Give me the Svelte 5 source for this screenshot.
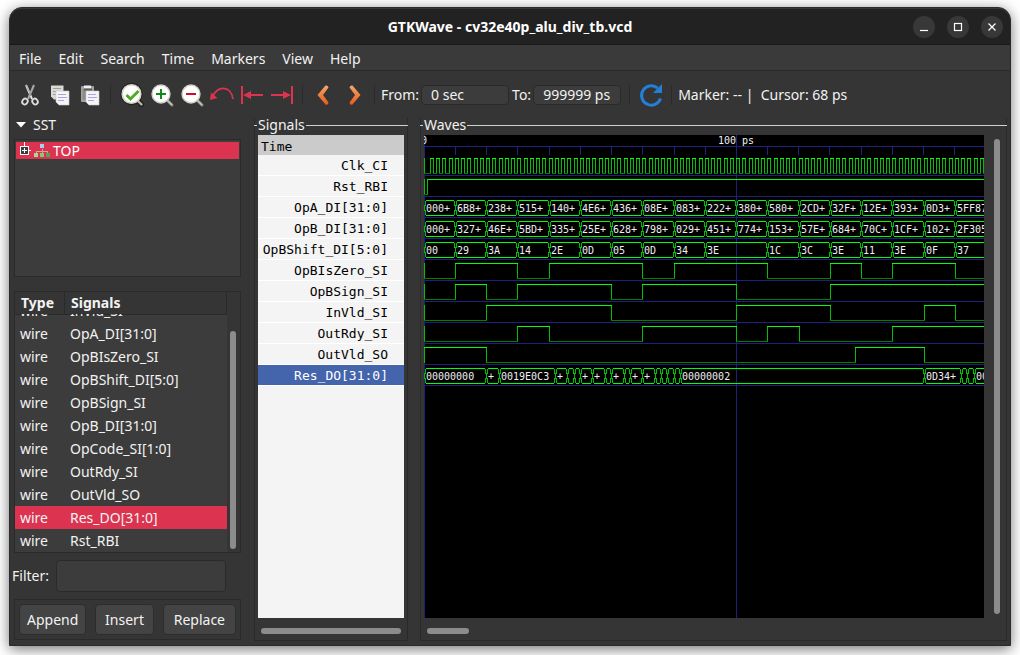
<script>
  const menus = ['File', 'Edit', 'Search', 'Time', 'Markers', 'View', 'Help'];

  const wires = [
    'InVld_SI', 'OpA_DI[31:0]', 'OpBIsZero_SI', 'OpBShift_DI[5:0]', 'OpBSign_SI', 'OpB_DI[31:0]',
    'OpCode_SI[1:0]', 'OutRdy_SI', 'OutVld_SO', 'Res_DO[31:0]', 'Rst_RBI'
  ];
  let selected = $state('Res_DO[31:0]');
  let filter = $state('');
  let from = $state('0 sec');
  let to = $state('999999 ps');

  const END = 180;
  const px = (ps) => Math.floor(ps * 3.125);
  const every10 = (labels) => labels.split(' ').map((label, i) => [i * 10, label]);

  // Bits list the times at which the value flips, starting from `start`.
  const signals = [
    { name: 'Clk_CI', start: 0, flips: Array.from({ length: END - 2 }, (_, i) => i + 2) },
    { name: 'Rst_RBI', start: 0, flips: [1] },
    { name: 'OpA_DI[31:0]', bus: every10('000+ 6B8+ 238+ 515+ 140+ 4E6+ 436+ 08E+ 083+ 222+ 380+ 580+ 2CD+ 32F+ 12E+ 393+ 0D3+ 5FF87') },
    { name: 'OpB_DI[31:0]', bus: every10('000+ 327+ 46E+ 5BD+ 335+ 25E+ 628+ 798+ 029+ 451+ 774+ 153+ 57E+ 684+ 70C+ 1CF+ 102+ 2F305') },
    { name: 'OpBShift_DI[5:0]', bus: [[0, '00'], [10, '29'], [20, '3A'], [30, '14'], [40, '2E'], [50, '0D'], [60, '05'], [70, '0D'], [80, '34'], [90, '3E'], [110, '1C'], [120, '3C'], [130, '3E'], [140, '11'], [150, '3E'], [160, '0F'], [170, '37']] },
    { name: 'OpBIsZero_SI', start: 0, flips: [10, 30, 40, 70, 80, 110, 130, 140, 150, 170] },
    { name: 'OpBSign_SI', start: 0, flips: [10, 20, 30, 60, 70, 100, 130] },
    { name: 'InVld_SI', start: 0, flips: [20, 60, 100, 130, 160, 170] },
    { name: 'OutRdy_SI', start: 0, flips: [30, 40, 70, 100, 110, 120, 150] },
    { name: 'OutVld_SO', start: 1, flips: [20, 138, 160] },
    { name: 'Res_DO[31:0]', bus: [[0, '00000000'], [20, '+'], [24, '0019E0C3'], [42, '+'], [46, ''], [48, ''], [50, '+'], [54, '+'], [58, ''], [60, '+'], [64, ''], [66, '+'], [70, '+'], [74, ''], [76, ''], [78, ''], [80, ''], [82, '00000002'], [160, '0D34+'], [172, ''], [174, ''], [176, '00']] }
  ];

  const ticks = [31, 62, 93, 125, 156, 187, 218, 250, 281, 312, 343, 374, 405, 437, 468, 499, 530];

  function trace(sig, row) {
    const top = 23 + row * 21;
    const low = top + 15;
    let hi = '';
    let lo = '';
    let edge = '';
    const texts = [];
    if (sig.bus) {
      sig.bus.forEach(([t, label], i) => {
        const last = i === sig.bus.length - 1;
        const x = px(t);
        const next = last ? px(END) : px(sig.bus[i + 1][0]);
        const a = x + 2;
        const b = next - 1;
        hi += `M${a} ${top + 0.5}H${b}M${a} ${low + 0.5}H${b}`;
        edge += `M${x + 1.5} ${top + 1}V${top + 4}L${x + 0.5} ${top + 7}V${top + 9}L${x + 1.5} ${low - 3}V${low}`;
        if (i) edge += `M${x - 0.5} ${top + 1}V${top + 4}L${x + 0.5} ${top + 7}M${x + 0.5} ${top + 9}L${x - 0.5} ${low - 3}V${low}`;
        if (label) texts.push({ x: x + 2, y: low - 3, label });
      });
    } else {
      let v = sig.start;
      let x = 0;
      edge += `M0.5 ${top}V${low + 1}`;
      for (const t of [...sig.flips, END]) {
        const n = px(t);
        if (v) hi += `M${x} ${top + 0.5}H${n + 1}`;
        else lo += `M${x} ${low + 0.5}H${n + 1}`;
        edge += `M${n + 0.5} ${top}V${low + 1}`;
        x = n;
        v = 1 - v;
      }
    }
    return { hi, lo, edge, texts };
  }
  const traces = signals.map(trace);
</script>

<div class="window">
  <header class="titlebar">
    <h1>GTKWave - cv32e40p_alu_div_tb.vcd</h1>
    <div class="winbtns">
      <button aria-label="Minimize"><svg width="22" height="22"><path d="M7 14.5h8" /></svg></button>
      <button aria-label="Maximize"><svg width="22" height="22"><rect x="7.5" y="7.5" width="7" height="7" /></svg></button>
      <button aria-label="Close"><svg width="22" height="22"><path d="M7.5 7.5l7 7M14.5 7.5l-7 7" /></svg></button>
    </div>
  </header>

  <nav class="menubar">
    {#each menus as m}<button>{m}</button>{/each}
  </nav>

  <div class="toolbar">
    <button aria-label="Cut"><svg width="24" height="24" fill="none">
      <path d="M8 2l6 14" stroke="#e6e6e6" stroke-width="2" /><path d="M16 2l-6 14" stroke="#a9a9a9" stroke-width="2" />
      <path d="M8 2l5 11" stroke="#777" stroke-width=".6" />
      <ellipse cx="7.3" cy="18.5" rx="2.6" ry="3" transform="rotate(35 7 18)" stroke="#ddd" stroke-width="1.8" />
      <ellipse cx="16.7" cy="18.5" rx="2.6" ry="3" transform="rotate(-35 17 18)" stroke="#ddd" stroke-width="1.8" />
    </svg></button>
    <button aria-label="Copy"><svg width="24" height="24">
      <path d="M3 2.500h12.500v14H6l-3-3z" fill="#d9d9d6" /><path d="M5 5.500h8M5 8.500h3M5 11.500h3" stroke="#a0a09c" />
      <path d="M8 8h13v14H11l-3-3z" fill="#f5f5f5" stroke="#c9c9c9" stroke-width=".6" />
      <path d="M10 11.500h8M10 14.500h9M10 17.500h6" stroke="#a6a6e8" />
    </svg></button>
    <button aria-label="Paste"><svg width="24" height="24">
      <rect x="3" y="3" width="13" height="16" rx="1" fill="#a3a39f" /><rect x="4.500" y="6" width="10" height="11" fill="#8b8b87" />
      <path d="M6 2.500h7v3H6z" fill="#f0f0ee" /><path d="M6 5.500h8v2H6z" fill="#5a5a58" />
      <path d="M8 8h13v14H11l-3-3z" fill="#f5f5f5" stroke="#c9c9c9" stroke-width=".6" />
      <path d="M10 11.500h8M10 14.500h9M10 17.500h6" stroke="#a6a6e8" />
    </svg></button>
    <i class="sep"></i>
    <button aria-label="Zoom Fit"><svg width="26" height="26">
      <path d="M18.500 18.500l4 4" stroke="#1e1e1c" stroke-width="5" stroke-linecap="round" /><circle cx="12.500" cy="12" r="11" fill="#1e1e1c" />
      <path d="M18.500 18.500l4 4" stroke="#b5b5ae" stroke-width="2.400" stroke-linecap="round" />
      <circle cx="12.500" cy="12" r="9.300" fill="#fff" stroke="#d5d5c8" stroke-width="1.600" />
      <path d="M7.500 13l4 4 8-8" fill="none" stroke="#4caa28" stroke-width="3" />
    </svg></button>
    <button aria-label="Zoom In"><svg width="26" height="26">
      <path d="M18 18l5 5" stroke="#8d8d86" stroke-width="3" stroke-linecap="round" /><path d="M18 18l5 5" stroke="#c9c9c0" stroke-width="1.200" />
      <circle cx="12" cy="12" r="9" fill="#fff" stroke="#cfcfc2" stroke-width="1.400" /><path d="M12 7v10M7 12h10" stroke="#0f8a1c" stroke-width="2" />
    </svg></button>
    <button aria-label="Zoom Out"><svg width="26" height="26">
      <path d="M18 18l5 5" stroke="#8d8d86" stroke-width="3" stroke-linecap="round" /><path d="M18 18l5 5" stroke="#c9c9c0" stroke-width="1.200" />
      <circle cx="12" cy="12" r="9" fill="#fff" stroke="#cfcfc2" stroke-width="1.400" /><path d="M7 12h10" stroke="#cf0a2c" stroke-width="2" />
    </svg></button>
    <button aria-label="Zoom Undo"><svg width="26" height="26">
      <path d="M4 14.500C7 4 22 2.500 24 17" fill="none" stroke="#dc3450" stroke-width="1.800" /><path d="M1 18l1-7.500 6.500 5.500z" fill="#dc3450" />
    </svg></button>
    <button aria-label="Zoom to Start"><svg width="26" height="26">
      <path d="M3 4v18" stroke="#dc3450" stroke-width="2" /><path d="M10 13h14" stroke="#dc3450" stroke-width="2" /><path d="M4 13l8-4v8z" fill="#dc3450" />
    </svg></button>
    <button aria-label="Zoom to End"><svg width="26" height="26">
      <path d="M23 4v18" stroke="#dc3450" stroke-width="2" /><path d="M2 13h14" stroke="#dc3450" stroke-width="2" /><path d="M22 13l-8-4v8z" fill="#dc3450" />
    </svg></button>
    <i class="sep"></i>
    <button aria-label="Find Previous Edge"><svg width="24" height="24">
      <defs><linearGradient id="warm" x1="0" y1="0" x2="0" y2="1"><stop offset="0" stop-color="#f5a868" /><stop offset="1" stop-color="#e8581c" /></linearGradient></defs>
      <path d="M13.500 2.500Q16 2 16.500 4.500L11 12l5.500 7.500Q16 22.500 13.500 21.500L5.500 12z" fill="url(#warm)" />
    </svg></button>
    <button aria-label="Find Next Edge"><svg width="24" height="24">
      <path d="M10.500 2.500Q8 2 7.500 4.500L13 12l-5.500 7.500Q8 22.500 10.500 21.500L18.500 12z" fill="url(#warm)" />
    </svg></button>
    <i class="sep"></i>
    <label for="from">From:</label><input id="from" class="time" bind:value={from} />
    <label for="to">To:</label><input id="to" class="time" bind:value={to} />
    <i class="sep"></i>
    <button aria-label="Reload"><svg width="26" height="26">
      <path d="M22.500 16.500A9.700 9.700 0 1 1 19.500 6" fill="none" stroke="#2280d8" stroke-width="3" /><path d="M24 2v9h-9z" fill="#2280d8" />
    </svg></button>
    <i class="sep"></i>
    <output>Marker: -- | &nbsp;Cursor: 68 ps</output>
  </div>

  <main>
    <aside>
      <button class="expander"><svg width="10" height="6"><path d="M0 0h10L5 5.500z" fill="#fff" /></svg>SST</button>
      <div class="tree">
        <div class="node">
          <svg width="30" height="17" shape-rendering="crispEdges">
            <path d="M8.500 0v4M13 8.500h2" stroke="#fff" /><rect x="4.500" y="4.500" width="8" height="8" fill="#3c3c3c" stroke="#fff" />
            <path d="M6 8.500h5M8.500 6v5" stroke="#fff" />
          </svg>
          <svg class="hier" width="18" height="14" shape-rendering="crispEdges">
            <path d="M9.500 5v4M3.500 10V7.500h11V10" fill="none" stroke="#dc9ca0" />
            <rect x="7" y="0" width="4" height="4" fill="#a9cdee" /><rect x="1" y="9" width="4" height="4" fill="#a5dc92" />
            <rect x="7" y="9" width="4" height="4" fill="#84cc70" /><rect x="13" y="9" width="4" height="4" fill="#50a84c" />
          </svg>
          <span>TOP</span>
        </div>
      </div>

      <div class="list">
        <table>
          <thead><tr><th>Type</th><th>Signals</th></tr></thead>
          <tbody>
            {#each wires as w}
              <tr class:sel={w === selected} onclick={() => (selected = w)}><td>wire</td><td>{w}</td></tr>
            {/each}
          </tbody>
        </table>
        <div class="gutter"><i></i></div>
      </div>

      <div class="filter"><label for="filter">Filter:</label><input id="filter" bind:value={filter} /></div>
      <div class="actions"><button>Append</button><button>Insert</button><button>Replace</button></div>
    </aside>

    <section class="frame names">
      <h2>Signals</h2>
      <div class="sheet">
        <div class="timehead">Time</div>
        {#each signals as s, i}<div class="sig" class:active={i === 10}>{s.name}</div>{/each}
      </div>
      <div class="hbar"><i class="full"></i></div>
    </section>

    <section class="frame waves">
      <h2>Waves</h2>
      <div class="view">
        <svg class="canvas" role="img" aria-label="Waveforms">
          <g class="grid">
            <rect x="0" y="0" width="1" height="100%" />
            <rect x="312" y="0" width="1" height="100%" />
            <rect x="0" y="11" width="100%" height="1" />
            {#each ticks as t}<rect x={t} y="11" width="1" height="9" />{/each}
            {#each signals as s, i}<rect x="0" y={40 + i * 21} width="100%" height="1" />{/each}
          </g>
          <text x="-3" y="9">0</text>
          <text x="294" y="9">100 ps</text>
          {#each traces as t}
            <path class="edge" d={t.edge} />
            <path class="lo" d={t.lo} />
            <path class="hi" d={t.hi} />
            {#each t.texts as l}<text x={l.x} y={l.y}>{l.label}</text>{/each}
          {/each}
        </svg>
        <div class="vbar"><i></i></div>
      </div>
      <div class="hbar"><i></i></div>
    </section>
  </main>
</div>

<style>
  :global(body) { margin: 0; background: #fff; }
  :global(#app) { display: flex; height: 100vh; box-sizing: border-box; padding: 7px 9px 9px; overflow: hidden; }
  * { box-sizing: border-box; }
  button, input, label, output { font: inherit; color: inherit; }
  button { background: none; border: 0; padding: 0; }
  svg { display: block; }

  .window {
    flex: 1; min-width: 0; display: flex; flex-direction: column;
    background: #353535; color: #f2f2f2; border: 1px solid #2b2b2b; border-radius: 13px 13px 0 0;
    box-shadow: 0 3px 14px rgba(0, 0, 0, .55);
    font: 14px/20px "Noto Sans", sans-serif;
  }
  .titlebar {
    position: relative; height: 37px; flex: none; display: flex; align-items: center; justify-content: center;
    background: #222; border-top: 1px solid #383838; border-bottom: 1px solid #181818; border-radius: 12px 12px 0 0;
  }
  h1 { margin: 0; font-size: 14px; font-weight: 700; color: #fff; }
  .winbtns { position: absolute; right: 7px; display: flex; gap: 12px; }
  .winbtns button { width: 22px; height: 22px; border-radius: 50%; background: #383838; }
  .winbtns svg { fill: none; stroke: #fff; stroke-width: 1.2; }

  .menubar { height: 26px; flex: none; display: flex; gap: 17px; padding: 2px 9px 0; background: #3a3a3a; border-bottom: 1px solid #2a2a2a; }

  .toolbar { height: 47px; flex: none; display: flex; align-items: center; padding: 1px 5px 0; white-space: nowrap; }
  .toolbar button { width: 30px; flex: none; display: flex; justify-content: center; }
  .sep { width: 1px; height: 20px; flex: none; margin: 0 6px 0 5px; background: #2a2a2a; }
  .time { width: 88px; height: 20px; margin: 0 3px 0 2px; padding: 0 9px; background: #3c3c3c; border: 1px solid #2a2a2a; border-radius: 4px; }

  main { flex: 1; min-height: 0; display: flex; padding: 0 3px 4px 4px; }
  aside { width: 227px; flex: none; margin: 0 13px 1px 0; display: flex; flex-direction: column; }
  .expander { display: flex; align-items: center; gap: 7px; height: 14px; padding-left: 2px; margin-bottom: 7px; }
  .tree { flex: none; height: 138px; padding: 2px 1px; background: #3c3c3c; border: 1px solid #2a2a2a; }
  .node { display: flex; align-items: center; height: 17px; background: #dc3450; line-height: 17px; color: #fff; }
  .node svg:first-child { width: 17px; }
  .hier { margin-right: 2px; }

  .list { flex: 1; min-height: 0; display: flex; margin-top: 14px; border: 1px solid #2a2a2a; background: #3c3c3c; }
  table { flex: 1; display: flex; flex-direction: column; min-height: 0; }
  thead { display: block; background: #353535; }
  tr { display: grid; grid-template-columns: 50px 1fr; height: 23px; flex: none; }
  thead tr { height: 22px; }
  th { text-align: left; border: solid #2a2a2a; border-width: 0 1px 1px 0; padding: 0 6px; line-height: 22px; }
  tbody { flex: 1; min-height: 0; display: flex; flex-direction: column; justify-content: flex-end; overflow: hidden; }
  td { padding: 0 5px; line-height: 24px; }
  .sel { background: #dc3450; }
  .gutter { width: 13px; background: #353535; padding: 39px 3px 3px; display: flex; }
  .gutter i, .vbar i { width: 6px; border-radius: 3px; background: #8c8c8c; }

  .filter { display: flex; align-items: center; gap: 7px; margin: 7px 15px 7px -2px; }
  .filter input { flex: 1; min-width: 0; height: 32px; background: #3c3c3c; border: 1px solid #2a2a2a; border-radius: 4px; }
  .actions { display: flex; justify-content: space-between; padding: 4px; border: 1px solid #2a2a2a; }
  .actions button { height: 31px; padding: 0 7px; background: #444; border: 1px solid #2c2c2c; border-radius: 4px; }
  .actions button:nth-child(2) { padding: 0 9px; }
  .actions button:last-child { padding: 0 10px; }

  .frame { display: flex; flex-direction: column; padding: 0 3px 0; border: solid #2a2a2a; border-width: 0 1px 1px; }
  .names { width: 154px; flex: none; margin-right: 12px; }
  .waves { flex: 1; min-width: 0; }
  h2 { display: flex; align-items: center; height: 14px; margin: 0 -4px 3px; font-size: 14px; font-weight: 400; }
  h2::before, h2::after { content: ""; height: 1px; background: #d0d0d0; }
  h2::before { width: 3px; margin-right: 1px; }
  h2::after { flex: 1; margin-left: 1px; }
  .sheet { flex: 1; min-height: 0; overflow: hidden; background: #f4f4f4; color: #000; font: 13px/20px "DejaVu Sans Mono", monospace; }
  .timehead { height: 20px; padding: 2px 3px 0; background: #cbcbcb; }
  .sig { height: 21px; padding: 1px 16px 0 0; text-align: right; border-bottom: 1px solid #fff; }
  .active { background: #4464ac; color: #fff; }
  .hbar { height: 22px; flex: none; display: flex; padding: 10px 3px 6px; }
  .hbar i { width: 42px; border-radius: 3px; background: #8c8c8c; }
  .hbar .full { width: auto; flex: 1; }

  .view { flex: 1; min-height: 0; display: flex; }
  .canvas { flex: 1; min-width: 0; height: 100%; background: #000; overflow: hidden; shape-rendering: crispEdges; }
  .canvas text { font: 10px "DejaVu Sans Mono", monospace; fill: #f0f0f0; }
  .grid { fill: #202080; }
  .canvas path { fill: none; stroke-width: 1; }
  .hi { stroke: #00ff00; }
  .lo { stroke: #008200; }
  .edge { stroke: #00c000; }
  .vbar { width: 19px; flex: none; display: flex; padding: 4px 0 4px 10px; }
</style>
